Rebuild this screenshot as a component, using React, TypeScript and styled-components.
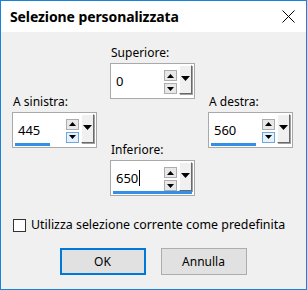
import React from "react"
import styled, { createGlobalStyle } from "styled-components"

const GlobalStyle = createGlobalStyle`
  html, body {
    margin: 0;
    padding: 0;
    background: #f0f0f0;
  }
  * {
    box-sizing: border-box;
  }
`

type SpinProps = {
  value: string
  bar?: number
  hover?: boolean
  caret?: boolean
}

const Spin = ({ value, bar, hover, caret }: SpinProps) => {
  return (
    <SpinBox>
      <Value>
        {value}
        {caret && <Caret />}
      </Value>
      <Stepper>
        <StepButton>
          <Arrow viewBox="0 0 7 4">
            <path d="M0 4 L3.5 0 L7 4 Z" />
          </Arrow>
        </StepButton>
        <StepButton $active={hover}>
          <Arrow viewBox="0 0 7 4">
            <path d="M0 0 L7 0 L3.5 4 Z" />
          </Arrow>
        </StepButton>
      </Stepper>
      <DropButton>
        <DropArrow viewBox="0 0 9 5">
          <path d="M0 0 L9 0 L4.5 5 Z" />
        </DropArrow>
      </DropButton>
      {bar !== undefined && <Bar style={{ width: bar }} />}
    </SpinBox>
  )
}

const App = () => {
  return (
    <Window>
      <GlobalStyle />
      <TitleBar>
        <Title>Selezione personalizzata</Title>
        <svg width="13" height="13" viewBox="0 0 13 13">
          <path d="M0.5 0.5 L12.5 12.5 M12.5 0.5 L0.5 12.5" stroke="#000" strokeWidth="1" />
        </svg>
      </TitleBar>
      <Body>
        <Fields>
          <Column>
            <Field>
              <Label>A sinistra:</Label>
              <Spin value="445" bar={35} hover />
            </Field>
          </Column>
          <Column>
            <Field>
              <Label>Superiore:</Label>
              <Spin value="0" />
            </Field>
            <Field>
              <Label>Inferiore:</Label>
              <Spin value="650" bar={79} caret />
            </Field>
          </Column>
          <Column>
            <Field>
              <Label>A destra:</Label>
              <Spin value="560" bar={45} hover />
            </Field>
          </Column>
        </Fields>
        <CheckRow>
          <CheckBox />
          <span>Utilizza selezione corrente come predefinita</span>
        </CheckRow>
        <Buttons>
          <Button $primary>OK</Button>
          <Button>Annulla</Button>
        </Buttons>
      </Body>
    </Window>
  )
}

export default App

const Window = styled.div`
  width: 307px;
  height: 290px;
  border: 1px solid #1883d7;
  background: #f0f0f0;
  display: flex;
  flex-direction: column;
  font-family: "Noto Sans", "Open Sans", sans-serif;
  font-size: 12px;
  color: #000;
`

const TitleBar = styled.div`
  height: 31px;
  background: #fff;
  display: flex;
  align-items: center;
  justify-content: space-between;
  padding: 0 11px 0 9px;
`

const Title = styled.div`
  font-size: 14px;
  font-weight: 700;
  letter-spacing: -0.1px;
`

const Body = styled.div`
  flex: 1;
  padding: 13px 12px 0 11px;
  display: flex;
  flex-direction: column;
`

const Fields = styled.div`
  display: grid;
  grid-template-columns: 85px 85px 85px;
  column-gap: 13px;
  align-items: center;
`

const Column = styled.div`
  display: flex;
  flex-direction: column;
  gap: 43px;
`

const Field = styled.div`
  display: flex;
  flex-direction: column;
  gap: 2px;
`

const Label = styled.div`
  line-height: 16px;
  padding-left: 1px;
`

const SpinBox = styled.div`
  position: relative;
  width: 85px;
  height: 36px;
  border: 1px solid #a9a9a9;
  background: #fff;
  display: flex;
  align-items: flex-start;
  padding-right: 2px;
`

const Value = styled.div`
  flex: 1;
  align-self: center;
  padding-left: 5px;
  font-size: 13px;
  display: flex;
  align-items: center;
`

const Caret = styled.span`
  display: inline-block;
  width: 1px;
  height: 16px;
  background: #000;
  margin-left: 1px;
`

const Stepper = styled.div`
  display: flex;
  flex-direction: column;
  gap: 2px;
  margin-top: 6px;
`

const StepButton = styled.div<{ $active?: boolean }>`
  width: 13px;
  height: 11px;
  border: 1px solid ${(p) => (p.$active ? "#6fa8dc" : "#adadad")};
  background: ${(p) => (p.$active ? "#e5f1fb" : "#e8e8e8")};
  display: flex;
  align-items: center;
  justify-content: center;
`

const Arrow = styled.svg`
  width: 7px;
  height: 4px;
  fill: #000;
`

const DropButton = styled.div`
  width: 13px;
  height: 29px;
  margin-top: 1px;
  margin-left: 2px;
  background: #f0f0f0;
  border-top: 1px solid #fff;
  border-left: 1px solid #fff;
  border-right: 1px solid #696969;
  border-bottom: 1px solid #696969;
  box-shadow: 1px 1px 0 #a0a0a0;
  display: flex;
  justify-content: center;
  padding-top: 10px;
`

const DropArrow = styled.svg`
  width: 9px;
  height: 5px;
  fill: #000;
`

const Bar = styled.div`
  position: absolute;
  left: 2px;
  bottom: 1px;
  height: 3px;
  background: #3390e6;
`

const CheckRow = styled.div`
  margin-top: 21px;
  display: flex;
  align-items: center;
  gap: 5px;
  line-height: 16px;
  padding-left: 1px;
  font-size: 12.4px;
`

const CheckBox = styled.div`
  width: 13px;
  height: 13px;
  border: 1px solid #333;
  background: #fff;
`

const Buttons = styled.div`
  margin-top: 15px;
  display: flex;
  justify-content: center;
  gap: 15px;
`

const Button = styled.div<{ $primary?: boolean }>`
  width: 86px;
  height: 27px;
  background: #e1e1e1;
  border: ${(p) => (p.$primary ? "2px solid #0078d7" : "1px solid #adadad")};
  display: flex;
  align-items: center;
  justify-content: center;
`
